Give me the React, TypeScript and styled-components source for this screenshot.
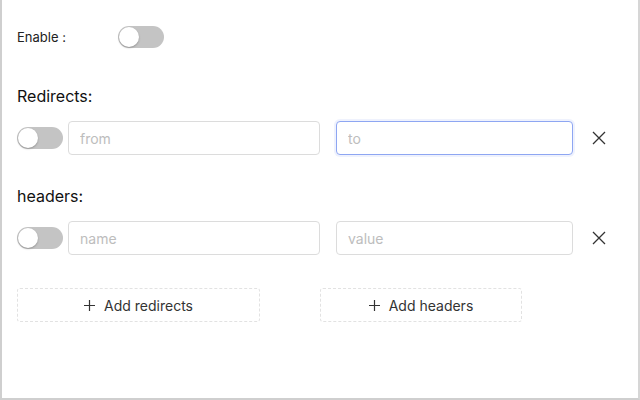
import React, { useState } from 'react';
import styled, { createGlobalStyle } from 'styled-components';

const GlobalStyle = createGlobalStyle`
  html, body {
    margin: 0;
    padding: 0;
    background: #ffffff;
  }
  body {
    font-family: Inter, "Noto Sans", "Liberation Sans", sans-serif;
    color: #1a1a1a;
  }
`;

const Popup = styled.div`
  box-sizing: border-box;
  width: 640px;
  height: 400px;
  border-left: 2px solid #cfcfcf;
  border-right: 2px solid #d6d6d6;
  border-bottom: 2px solid #cfcfcf;
  padding: 26px 0 0 15px;
  background: #fff;
`;

const EnableRow = styled.div`
  display: flex;
  align-items: center;
  height: 22px;
`;

const EnableLabel = styled.span`
  width: 101px;
  font-size: 13px;
  color: #222;
`;

const Track = styled.button<{ $on: boolean }>`
  position: relative;
  flex: none;
  width: 46px;
  height: 22px;
  padding: 0;
  border: none;
  border-radius: 11px;
  background: ${p => (p.$on ? '#1890ff' : '#c4c4c4')};
  cursor: pointer;
`;

const Knob = styled.span<{ $on: boolean }>`
  position: absolute;
  top: 1px;
  left: ${p => (p.$on ? '25px' : '1px')};
  width: 20px;
  height: 20px;
  border-radius: 50%;
  background: #fff;
  box-shadow: 0 1px 2px rgba(0, 0, 0, 0.25);
`;

const Heading = styled.h3<{ $top: number }>`
  margin: ${p => p.$top}px 0 14px;
  font-size: 16px;
  line-height: 22px;
  font-weight: 400;
  color: #111;
`;

const Row = styled.div`
  display: flex;
  align-items: center;
  height: 34px;
`;

const Field = styled.input<{ $width: number; $focused?: boolean }>`
  box-sizing: border-box;
  flex: none;
  width: ${p => p.$width}px;
  height: 34px;
  padding: 0 11px;
  border: 1px solid ${p => (p.$focused ? '#8ea6f2' : '#dcdcdc')};
  border-radius: 4px;
  font-family: inherit;
  font-size: 14px;
  color: #333;
  outline: none;
  box-shadow: ${p => (p.$focused ? '0 0 0 2px rgba(120, 150, 240, 0.12)' : 'none')};
  &::placeholder {
    color: #bdbdbd;
  }
`;

const FromField = styled(Field)`
  margin-left: 5px;
`;

const ToField = styled(Field)`
  margin-left: 16px;
`;

const RemoveButton = styled.button`
  display: flex;
  align-items: center;
  justify-content: center;
  margin-left: 17px;
  width: 18px;
  height: 18px;
  padding: 0;
  border: none;
  background: none;
  color: #333;
  cursor: pointer;
`;

const ButtonRow = styled.div`
  display: flex;
  margin-top: 33px;
  gap: 60px;
`;

const AddButton = styled.button<{ $width: number }>`
  box-sizing: border-box;
  display: flex;
  align-items: center;
  justify-content: center;
  gap: 9px;
  width: ${p => p.$width}px;
  height: 34px;
  border: 1px dashed #e2e2e2;
  border-radius: 3px;
  background: #fff;
  font-family: inherit;
  font-size: 14px;
  color: #333;
  cursor: pointer;
`;

const Switch: React.FC<{ on: boolean; onToggle: () => void }> = ({ on, onToggle }) => (
  <Track $on={on} onClick={onToggle}>
    <Knob $on={on} />
  </Track>
);

const CrossIcon = () => (
  <svg width="14" height="14" viewBox="0 0 14 14" fill="none" stroke="currentColor" strokeWidth="1.3">
    <path d="M1 1l12 12M13 1L1 13" />
  </svg>
);

const PlusIcon = () => (
  <svg width="11" height="11" viewBox="0 0 11 11" fill="none" stroke="currentColor" strokeWidth="1.2">
    <path d="M5.5 0v11M0 5.5h11" />
  </svg>
);

export default function App() {
  const [enabled, setEnabled] = useState(false);
  const [redirectOn, setRedirectOn] = useState(false);
  const [headerOn, setHeaderOn] = useState(false);

  return (
    <>
      <GlobalStyle />
      <Popup>
        <EnableRow>
          <EnableLabel>Enable :</EnableLabel>
          <Switch on={enabled} onToggle={() => setEnabled(!enabled)} />
        </EnableRow>

        <Heading $top={37}>Redirects:</Heading>
        <Row>
          <Switch on={redirectOn} onToggle={() => setRedirectOn(!redirectOn)} />
          <FromField $width={252} placeholder="from" />
          <ToField $width={237} $focused placeholder="to" />
          <RemoveButton>
            <CrossIcon />
          </RemoveButton>
        </Row>

        <Heading $top={30}>headers:</Heading>
        <Row>
          <Switch on={headerOn} onToggle={() => setHeaderOn(!headerOn)} />
          <FromField $width={252} placeholder="name" />
          <ToField $width={237} placeholder="value" />
          <RemoveButton>
            <CrossIcon />
          </RemoveButton>
        </Row>

        <ButtonRow>
          <AddButton $width={243}>
            <PlusIcon />
            Add redirects
          </AddButton>
          <AddButton $width={202}>
            <PlusIcon />
            Add headers
          </AddButton>
        </ButtonRow>
      </Popup>
    </>
  );
}
